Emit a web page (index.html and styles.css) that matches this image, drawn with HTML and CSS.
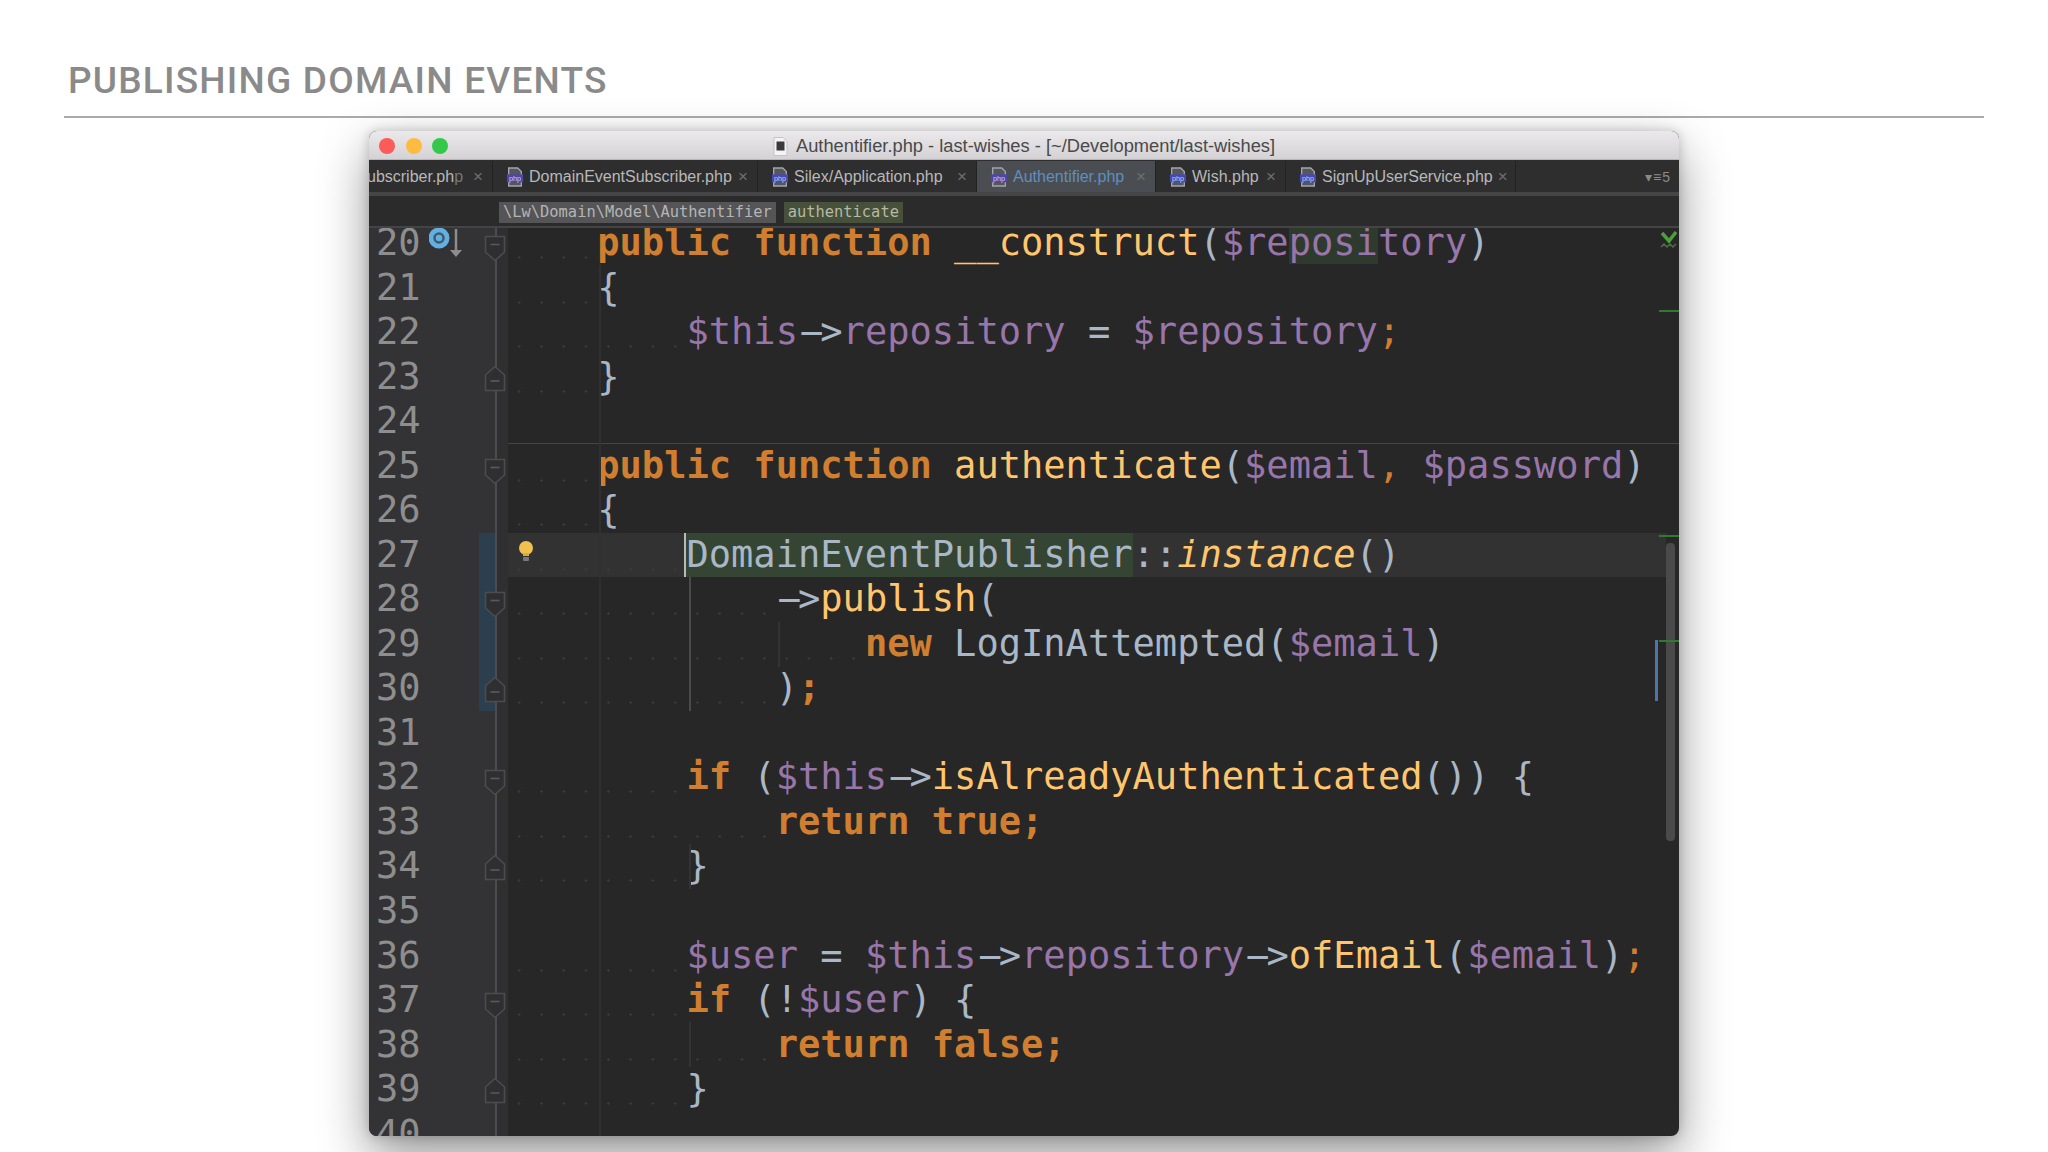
FILE: index.html
```html
<!DOCTYPE html>
<html lang="en">

<head>
    <meta charset="UTF-8">
    <title>Publishing Domain Events</title>
    <link rel="stylesheet" href="styles.css">
</head>

<body>
    <svg class="defs" width="0" height="0">
        <symbol id="fold-open" viewBox="0 0 22 27">
            <path d="M1.5 1.5h19v15.5L11 25.5 1.5 17z" fill="#2f2f31" stroke="#4c4c4e" stroke-width="1.6" />
            <path d="M6.5 9.5h9" stroke="#5a5a5c" stroke-width="1.6" />
        </symbol>
        <symbol id="fold-close" viewBox="0 0 22 27">
            <path d="M1.5 25.5h19V10L11 1.5 1.5 10z" fill="#2f2f31" stroke="#4c4c4e" stroke-width="1.6" />
            <path d="M6.5 16h9" stroke="#5a5a5c" stroke-width="1.6" />
        </symbol>
        <symbol id="php-file" viewBox="0 0 20 22">
            <path d="M3 1h10l4 4v16H3z" fill="#55575a" stroke="#a3a5a8" stroke-width="1.5" />
            <rect x="1" y="8" width="18" height="9" fill="#4a48a8" />
            <text x="10" y="15.5" text-anchor="middle" class="php-label">php</text>
        </symbol>
    </svg>

    <header class="slide-title">
        <h1>PUBLISHING DOMAIN EVENTS</h1>
    </header>

    <main class="stage">
        <div class="window">
            <div class="titlebar">
                <div class="lights">
                    <span class="light red"></span>
                    <span class="light yellow"></span>
                    <span class="light green"></span>
                </div>
                <svg class="title-icon" width="15" height="19" viewBox="0 0 15 19">
                    <path d="M1 .5h9l4 4v14H1z" fill="#f4f4f4" stroke="#c4c4c4" />
                    <rect x="3.5" y="4.5" width="8" height="9" fill="#3a3a3a" />
                </svg>
                <span>Authentifier.php - last-wishes - [~/Development/last-wishes]</span>
            </div>

            <div class="tabs">
                <div class="tab clipped"><span>DomainEventSubscriber.ph<span class="fade">p</span></span><i>×</i></div>
                <div class="tab w-265"><svg class="file-icon"><use href="#php-file" /></svg><span>DomainEventSubscriber.php</span><i>×</i></div>
                <div class="tab w-219"><svg class="file-icon"><use href="#php-file" /></svg><span>Silex/Application.php</span><i>×</i></div>
                <div class="tab active w-179"><svg class="file-icon"><use href="#php-file" /></svg><span>Authentifier.php</span><i>×</i></div>
                <div class="tab w-130"><svg class="file-icon"><use href="#php-file" /></svg><span>Wish.php</span><i>×</i></div>
                <div class="tab w-230"><svg class="file-icon"><use href="#php-file" /></svg><span>SignUpUserService.php</span><i>×</i></div>
                <div class="tab-more">▾≡5</div>
            </div>

            <div class="crumbs">
                <span class="crumb">\Lw\Domain\Model\Authentifier</span>
                <span class="crumb method">authenticate</span>
            </div>

            <div class="editor">
                <div class="rows">
                    <div class="row">
                        <div class="gutter"><span class="num">20</span>
                            <svg class="override" width="36" height="32" viewBox="0 0 36 32">
                                <circle cx="10" cy="10" r="10.5" fill="#62afe0" />
                                <circle cx="10" cy="10" r="4.5" fill="none" stroke="#3d5a6e" stroke-width="2.5" />
                                <path d="M27 1v23" stroke="#8d8d8d" stroke-width="2.5" />
                                <path d="M21 22h12l-6 7z" fill="#8d8d8d" />
                            </svg>
                            <svg class="fold open"><use href="#fold-open" /></svg>
                        </div>
                        <div class="code"><span class="ws">    </span><span class="kw">public function</span> <span class="fn">__construct</span>(<span class="var">$re<span class="match">posi</span>tory</span>)</div>
                    </div>
                    <div class="row">
                        <div class="gutter"><span class="num">21</span></div>
                        <div class="code"><span class="ws">    </span>{</div>
                    </div>
                    <div class="row">
                        <div class="gutter"><span class="num">22</span></div>
                        <div class="code"><span class="ws">        </span><span class="var">$this</span><span class="dash">-</span>&gt;<span class="var">repository</span> = <span class="var">$repository</span><span class="kw-thin">;</span></div>
                    </div>
                    <div class="row">
                        <div class="gutter"><span class="num">23</span><svg class="fold close"><use href="#fold-close" /></svg></div>
                        <div class="code"><span class="ws">    </span>}</div>
                    </div>
                    <div class="row method-end">
                        <div class="gutter"><span class="num">24</span></div>
                        <div class="code"></div>
                    </div>
                    <div class="row">
                        <div class="gutter"><span class="num">25</span><svg class="fold open"><use href="#fold-open" /></svg></div>
                        <div class="code"><span class="ws">    </span><span class="kw">public function</span> <span class="fn">authenticate</span>(<span class="var">$email</span><span class="kw-thin">,</span> <span class="var">$password</span>)</div>
                    </div>
                    <div class="row">
                        <div class="gutter"><span class="num">26</span></div>
                        <div class="code"><span class="ws">    </span>{</div>
                    </div>
                    <div class="row current changed">
                        <div class="gutter"><span class="num">27</span></div>
                        <div class="code"><svg class="bulb" width="16" height="22" viewBox="0 0 16 22"><circle cx="8" cy="7" r="7" fill="#f0c050" /><rect x="5" y="12" width="6" height="3" fill="#e0a838" /><rect x="5" y="16" width="6" height="4" rx="1" fill="#77787a" /></svg><span class="ws">        </span><span class="symbol">DomainEventPublisher</span>::<span class="fn static">instance</span>()</div>
                    </div>
                    <div class="row changed">
                        <div class="gutter"><span class="num">28</span><svg class="fold open"><use href="#fold-open" /></svg></div>
                        <div class="code"><span class="ws">            </span><span class="dash">-</span>&gt;<span class="fn">publish</span>(</div>
                    </div>
                    <div class="row changed">
                        <div class="gutter"><span class="num">29</span></div>
                        <div class="code"><span class="ws">                </span><span class="kw">new</span> LogInAttempted(<span class="var">$email</span>)</div>
                    </div>
                    <div class="row changed">
                        <div class="gutter"><span class="num">30</span><svg class="fold close"><use href="#fold-close" /></svg></div>
                        <div class="code"><span class="ws">            </span>)<span class="kw">;</span></div>
                    </div>
                    <div class="row">
                        <div class="gutter"><span class="num">31</span></div>
                        <div class="code"></div>
                    </div>
                    <div class="row">
                        <div class="gutter"><span class="num">32</span><svg class="fold open"><use href="#fold-open" /></svg></div>
                        <div class="code"><span class="ws">        </span><span class="kw">if</span> (<span class="var">$this</span><span class="dash">-</span>&gt;<span class="fn">isAlreadyAuthenticated</span>()) {</div>
                    </div>
                    <div class="row">
                        <div class="gutter"><span class="num">33</span></div>
                        <div class="code"><span class="ws">            </span><span class="kw">return true;</span></div>
                    </div>
                    <div class="row">
                        <div class="gutter"><span class="num">34</span><svg class="fold close"><use href="#fold-close" /></svg></div>
                        <div class="code"><span class="ws">        </span>}</div>
                    </div>
                    <div class="row">
                        <div class="gutter"><span class="num">35</span></div>
                        <div class="code"></div>
                    </div>
                    <div class="row">
                        <div class="gutter"><span class="num">36</span></div>
                        <div class="code"><span class="ws">        </span><span class="var">$user</span> = <span class="var">$this</span><span class="dash">-</span>&gt;<span class="var">repository</span><span class="dash">-</span>&gt;<span class="fn">ofEmail</span>(<span class="var">$email</span>)<span class="kw-thin">;</span></div>
                    </div>
                    <div class="row">
                        <div class="gutter"><span class="num">37</span><svg class="fold open"><use href="#fold-open" /></svg></div>
                        <div class="code"><span class="ws">        </span><span class="kw">if</span> (!<span class="var">$user</span>) {</div>
                    </div>
                    <div class="row">
                        <div class="gutter"><span class="num">38</span></div>
                        <div class="code"><span class="ws">            </span><span class="kw">return false;</span></div>
                    </div>
                    <div class="row">
                        <div class="gutter"><span class="num">39</span><svg class="fold close"><use href="#fold-close" /></svg></div>
                        <div class="code"><span class="ws">        </span>}</div>
                    </div>
                    <div class="row">
                        <div class="gutter"><span class="num">40</span></div>
                        <div class="code"></div>
                    </div>
                </div>

                <span class="guide outer"></span>
                <span class="guide inner-a"></span>
                <span class="guide inner-b"></span>
                <span class="guide inner-c"></span>
                <span class="guide inner-d"></span>

                <div class="scroll-thumb"></div>
                <span class="mark green first"></span>
                <span class="mark green second"></span>
                <span class="mark green third"></span>
                <span class="mark blue"></span>
                <svg class="status-ok" width="18" height="22" viewBox="0 0 18 22">
                    <path d="M2 3l7 8 7-9" fill="none" stroke="#4f9e3c" stroke-width="3.5" />
                    <path d="M1 17l3-3 3 3 3-3 3 3 3-3" fill="none" stroke="#4b6e45" stroke-width="1.5" />
                </svg>
            </div>
        </div>
    </main>
</body>

</html>
```

FILE: styles.css
```css
* {
    box-sizing: border-box;
}

html,
body {
    height: 1152px;
    margin: 0;
    overflow: hidden;
    background-color: #ffffff;
}

body {
    font-family: "Liberation Sans", Arial, sans-serif;
}

.defs {
    position: absolute;
}

.php-label {
    font-family: "Liberation Sans", Arial, sans-serif;
    font-size: 8px;
    fill: #c9c8f5;
}

/* slide heading */
.slide-title {
    height: 118px;
    margin: 0 64px;
    padding: 59px 0 0 4px;
    border-bottom: 2px solid #ababab;
}

.slide-title h1 {
    margin: 0;
    font-family: Roboto, sans-serif;
    font-size: 37px;
    line-height: 43px;
    font-weight: 500;
    letter-spacing: 1.22px;
    color: #8a8a8a;
}

.stage {
    display: flex;
    padding: 13px 0 0 369px;
}

/* ide window */
.window {
    width: 1310px;
    height: 1005px;
    border-radius: 8px;
    overflow: hidden;
    background-color: #272727;
    box-shadow: 0 20px 50px rgba(0, 0, 0, 0.42), 0 0 12px rgba(0, 0, 0, 0.2);
}

.titlebar {
    position: relative;
    display: flex;
    justify-content: center;
    align-items: center;
    gap: 8px;
    height: 29px;
    padding-top: 2px;
    font-size: 18.3px;
    color: #4a4a4a;
    background: linear-gradient(#ebe9eb, #d4d2d4);
    border-bottom: 1px solid #b8b6b8;
}

.lights {
    position: absolute;
    left: 10px;
    top: 7px;
    display: flex;
    gap: 10.5px;
}

.light {
    width: 16px;
    height: 16px;
    border-radius: 50%;
}

.light.red {
    background-color: #fc5b57;
}

.light.yellow {
    background-color: #fdbc40;
}

.light.green {
    background-color: #34c84a;
}

.tabs {
    display: flex;
    height: 36px;
    padding-top: 1px;
    font-size: 16px;
    color: #b8b8b8;
    background-color: #2e2e2f;
    border-bottom: 4px solid #454547;
}

.tab {
    display: flex;
    align-items: center;
    flex-shrink: 0;
    gap: 5px;
    padding-left: 13px;
    border-right: 1px solid #222223;
    white-space: nowrap;
}

.tab i {
    margin-left: auto;
    padding-right: 9px;
    font-style: normal;
    font-size: 17px;
    color: #6f6f6f;
}

.tab.clipped {
    justify-content: flex-end;
    width: 124px;
    padding-left: 0;
    gap: 10px;
    overflow: hidden;
}

.tab.clipped i {
    margin-left: 0;
    flex-shrink: 0;
}

.fade {
    color: #77777a;
}

.w-265 {
    width: 265px;
}

.w-219 {
    width: 219px;
}

.w-179 {
    width: 179px;
}

.w-130 {
    width: 130px;
}

.w-230 {
    width: 230px;
}

.tab.active {
    color: #5f8fc0;
    background-color: #4a4e52;
}

.file-icon {
    width: 18px;
    height: 20px;
    flex-shrink: 0;
}

.tab-more {
    display: flex;
    align-items: center;
    margin-left: auto;
    padding-right: 8px;
    font-size: 14px;
    letter-spacing: 1px;
    color: #8a8a8a;
}

.crumbs {
    display: flex;
    align-items: center;
    gap: 8px;
    height: 32px;
    padding: 3px 0 0 130px;
    font-family: "DejaVu Sans Mono", monospace;
    font-size: 15.4px;
    background-color: #2b2b2c;
    border-bottom: 2px solid #444446;
}

.crumb {
    display: block;
    height: 21px;
    padding: 0 4px;
    line-height: 21px;
    color: #b4b4b4;
    background-color: #555558;
}

.crumb.method {
    color: #b6b9a4;
    background-color: #46503a;
}

/* code area */
.editor {
    position: relative;
    height: 908px;
    overflow: hidden;
}

.rows {
    margin-top: -7px;
    font-family: "DejaVu Sans Mono", monospace;
    font-size: 37.06px;
    line-height: 44.54px;
    color: #a9b7c6;
}

.row {
    display: flex;
    height: 44.54px;
}

.gutter {
    position: relative;
    flex: 0 0 139px;
    padding-left: 7px;
    background: linear-gradient(90deg, #333335 126px, #4c4c4e 126px, #4c4c4e 128px, #2f2f30 128px);
}

.changed .gutter {
    background: linear-gradient(90deg, #333335 110px, #2c3f4f 110px, #2c3f4f 126px, #4c4c4e 126px, #4c4c4e 128px, #2f2f30 128px);
}

.num {
    color: #8e8e8e;
}

.override {
    position: absolute;
    left: 60px;
    top: 7px;
}

.fold {
    position: absolute;
    left: 115px;
    width: 22px;
    height: 27px;
}

.fold.open {
    top: 14px;
}

.fold.close {
    top: 10px;
}

.code {
    position: relative;
    flex: 1;
    white-space: pre;
}

.ws {
    background-image: radial-gradient(circle, #3b3b3b 1px, transparent 1.3px);
    background-size: 1ch 100%;
    background-position: 0 15px;
    background-repeat: repeat-x;
}

.kw {
    font-weight: 700;
    color: #d07e30;
}

.kw-thin {
    color: #d07e30;
}

.fn {
    color: #ffc66d;
}

.fn.static {
    font-style: italic;
}

.var {
    color: #9876aa;
}

.match {
    background-color: #2f3a2f;
}

/* the dash of an arrow runs into the > in the ide font */
.dash {
    text-shadow: 4px 0 currentColor, 8px 0 currentColor, -3px 0 currentColor;
}

.current .code {
    margin-right: 13px;
    background-color: #323232;
}

.symbol {
    display: inline-block;
    background-color: #344534;
    box-shadow: -2px 0 0 #b9b9b9;
}

.method-end .code {
    border-bottom: 1px solid #454545;
}

.bulb {
    position: absolute;
    left: 10px;
    top: 8px;
}

.guide {
    position: absolute;
    width: 2px;
}

.guide.outer {
    left: 230px;
    top: 37px;
    bottom: 0;
    background-color: #303030;
}

.guide.inner-a {
    left: 320px;
    top: 349px;
    height: 134px;
    background-color: #4a4a4a;
}

.guide.inner-b {
    left: 409px;
    top: 394px;
    height: 45px;
    background-color: #333333;
}

.guide.inner-c {
    left: 320px;
    top: 616px;
    height: 45px;
    background-color: #333333;
}

.guide.inner-d {
    left: 320px;
    top: 794px;
    height: 45px;
    background-color: #333333;
}

.scroll-thumb {
    position: absolute;
    right: 4px;
    top: 315px;
    width: 9px;
    height: 298px;
    border-radius: 4px;
    background-color: #4a4a4b;
}

.mark {
    position: absolute;
}

.mark.green {
    right: 0;
    width: 20px;
    height: 2px;
    background-color: #2f7a2c;
}

.mark.first {
    top: 82px;
}

.mark.second {
    top: 307px;
}

.mark.third {
    top: 412px;
}

.mark.blue {
    right: 21px;
    top: 412px;
    width: 3px;
    height: 61px;
    background-color: #4a77a8;
}

.status-ok {
    position: absolute;
    right: 1px;
    top: 2px;
}
```
